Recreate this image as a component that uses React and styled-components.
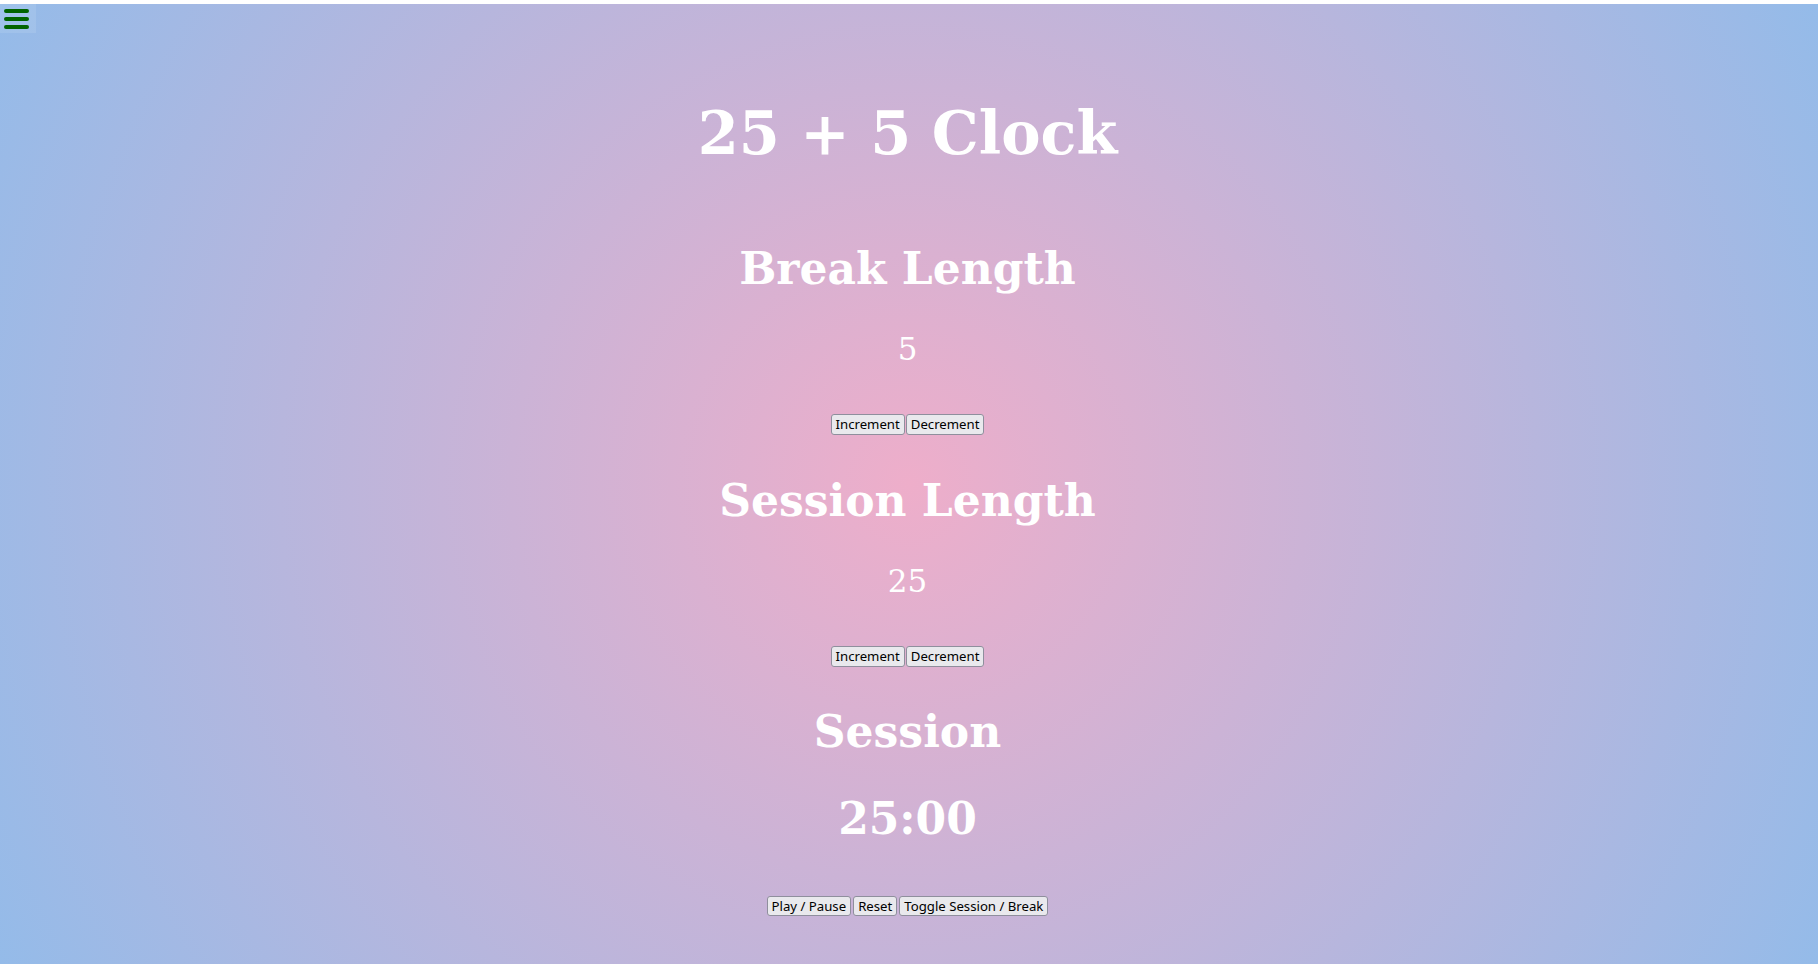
import React, { useEffect, useRef, useState } from "react";
import styled, { createGlobalStyle } from "styled-components";

const GlobalStyle = createGlobalStyle`
  html, body {
    margin: 0;
    padding: 0;
    background: #ffffff;
  }
`;

const Page = styled.main`
  position: relative;
  margin-top: 4px;
  padding-right: 3px;
  min-height: calc(100vh - 4px);
  background: radial-gradient(circle, #eeaeca 0%, #94bbe9 100%);
  display: flex;
  flex-direction: column;
  align-items: center;
  font-family: "DejaVu Serif", serif;
  color: #ffffff;
  text-align: center;
`;

const MenuBtn = styled.button`
  position: absolute;
  left: 0;
  top: 0;
  width: 36px;
  height: 29px;
  padding: 5px 0 0 4px;
  margin: 0;
  border: none;
  background: rgba(255, 255, 255, 0.1);
  display: flex;
  flex-direction: column;
  gap: 4px;
  cursor: pointer;
`;

const MenuBar = styled.span`
  display: block;
  width: 25px;
  height: 4px;
  border-radius: 2px;
  background: #006400;
`;

const Title = styled.h1`
  margin: 100px 0 0;
  font-size: 59px;
  line-height: 1;
  font-weight: bold;
`;

const Section = styled.section`
  display: flex;
  flex-direction: column;
  align-items: center;
  margin-top: ${(p) => p.$top}px;
`;

const Heading = styled.h2`
  margin: 0;
  font-size: 44px;
  line-height: 1;
  font-weight: bold;
`;

const Value = styled.p`
  margin: 43px 0 0;
  font-size: 31px;
  line-height: 1;
  font-weight: normal;
`;

const Timer = styled.p`
  margin: 43px 0 0;
  font-size: 44px;
  line-height: 1;
  font-weight: bold;
`;

const BtnRow = styled.div`
  display: flex;
  gap: ${(p) => p.$gap || 1}px;
  margin-top: ${(p) => p.$top}px;
`;

const Btn = styled.button`
  box-sizing: border-box;
  height: ${(p) => p.$h || 21}px;
  padding: 0 4px;
  border: 1px solid #8f8f9d;
  border-radius: 3px;
  background: #e9e9ed;
  color: #000000;
  font-family: "Noto Sans", "DejaVu Sans", sans-serif;
  font-size: 13.2px;
  line-height: 17px;
  cursor: pointer;
  &:hover {
    background: #d0d0d7;
  }
`;

const fmt = (s) =>
  `${String(Math.floor(s / 60)).padStart(2, "0")}:${String(s % 60).padStart(2, "0")}`;

const App = () => {
  const [breakLen, setBreakLen] = useState(5);
  const [sessionLen, setSessionLen] = useState(25);
  const [mode, setMode] = useState("Session");
  const [left, setLeft] = useState(25 * 60);
  const [running, setRunning] = useState(false);
  const timer = useRef(null);

  useEffect(() => {
    if (!running) return;
    timer.current = setInterval(() => setLeft((l) => (l > 0 ? l - 1 : 0)), 1000);
    return () => clearInterval(timer.current);
  }, [running]);

  const change = (which, d) => {
    if (running) return;
    if (which === "break") {
      const v = Math.min(60, Math.max(1, breakLen + d));
      setBreakLen(v);
      if (mode === "Break") setLeft(v * 60);
    } else {
      const v = Math.min(60, Math.max(1, sessionLen + d));
      setSessionLen(v);
      if (mode === "Session") setLeft(v * 60);
    }
  };

  const reset = () => {
    setRunning(false);
    setBreakLen(5);
    setSessionLen(25);
    setMode("Session");
    setLeft(25 * 60);
  };

  const toggle = () => {
    const next = mode === "Session" ? "Break" : "Session";
    setMode(next);
    setLeft((next === "Session" ? sessionLen : breakLen) * 60);
  };

  return (
    <>
      <GlobalStyle />
      <Page>
        <MenuBtn aria-label="menu">
          <MenuBar />
          <MenuBar />
          <MenuBar />
        </MenuBtn>
        <Title>25 + 5 Clock</Title>

        <Section $top={84}>
          <Heading>Break Length</Heading>
          <Value>{breakLen}</Value>
          <BtnRow $top={49}>
            <Btn onClick={() => change("break", 1)}>Increment</Btn>
            <Btn onClick={() => change("break", -1)}>Decrement</Btn>
          </BtnRow>
        </Section>

        <Section $top={44}>
          <Heading>Session Length</Heading>
          <Value>{sessionLen}</Value>
          <BtnRow $top={49}>
            <Btn onClick={() => change("session", 1)}>Increment</Btn>
            <Btn onClick={() => change("session", -1)}>Decrement</Btn>
          </BtnRow>
        </Section>

        <Section $top={43}>
          <Heading>{mode}</Heading>
          <Timer>{fmt(left)}</Timer>
          <BtnRow $top={55} $gap={2}>
            <Btn $h={20} onClick={() => setRunning((r) => !r)}>Play / Pause</Btn>
            <Btn $h={20} onClick={reset}>Reset</Btn>
            <Btn $h={20} onClick={toggle}>Toggle Session / Break</Btn>
          </BtnRow>
        </Section>
      </Page>
    </>
  );
};

export default App;
